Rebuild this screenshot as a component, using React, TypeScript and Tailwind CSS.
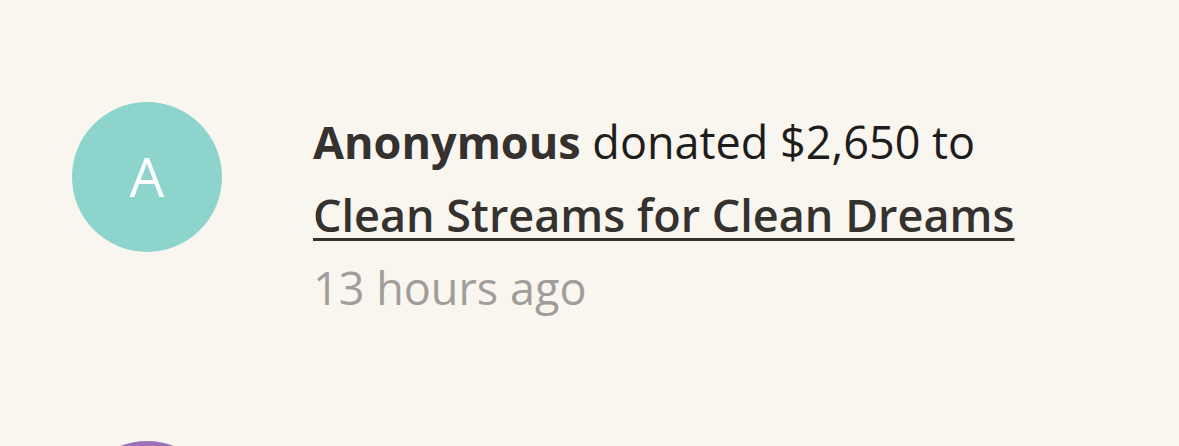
export default function App() {
  return (
    <div className="w-[1179px] h-[446px] overflow-hidden bg-[#f9f6f0] font-['Open_Sans',sans-serif]">
      <div className="flex items-start h-[441px] pl-[72px] pt-[102px]">
        <div className="w-[150px] h-[150px] shrink-0 rounded-full bg-[#8dd4cc] flex items-center justify-center text-white text-[55px] pb-[2px]">
          A
        </div>
        <div className="ml-[91px] mt-[3px] text-[45px] leading-[73px] text-[#1f1d1c]">
          <div>
            <span className="font-bold text-[#35312f]">Anonymous</span> donated $2,650 to
          </div>
          <div>
            <a href="#" className="font-semibold text-[#35312f] underline underline-offset-[6px] decoration-[3px]">
              Clean Streams for Clean Dreams
            </a>
          </div>
          <div className="text-[#a19e99]">13 hours ago</div>
        </div>
      </div>
      <div className="pl-[72px]">
        <div className="w-[150px] h-[150px] rounded-full bg-[#9b72b8]" />
      </div>
    </div>
  );
}
